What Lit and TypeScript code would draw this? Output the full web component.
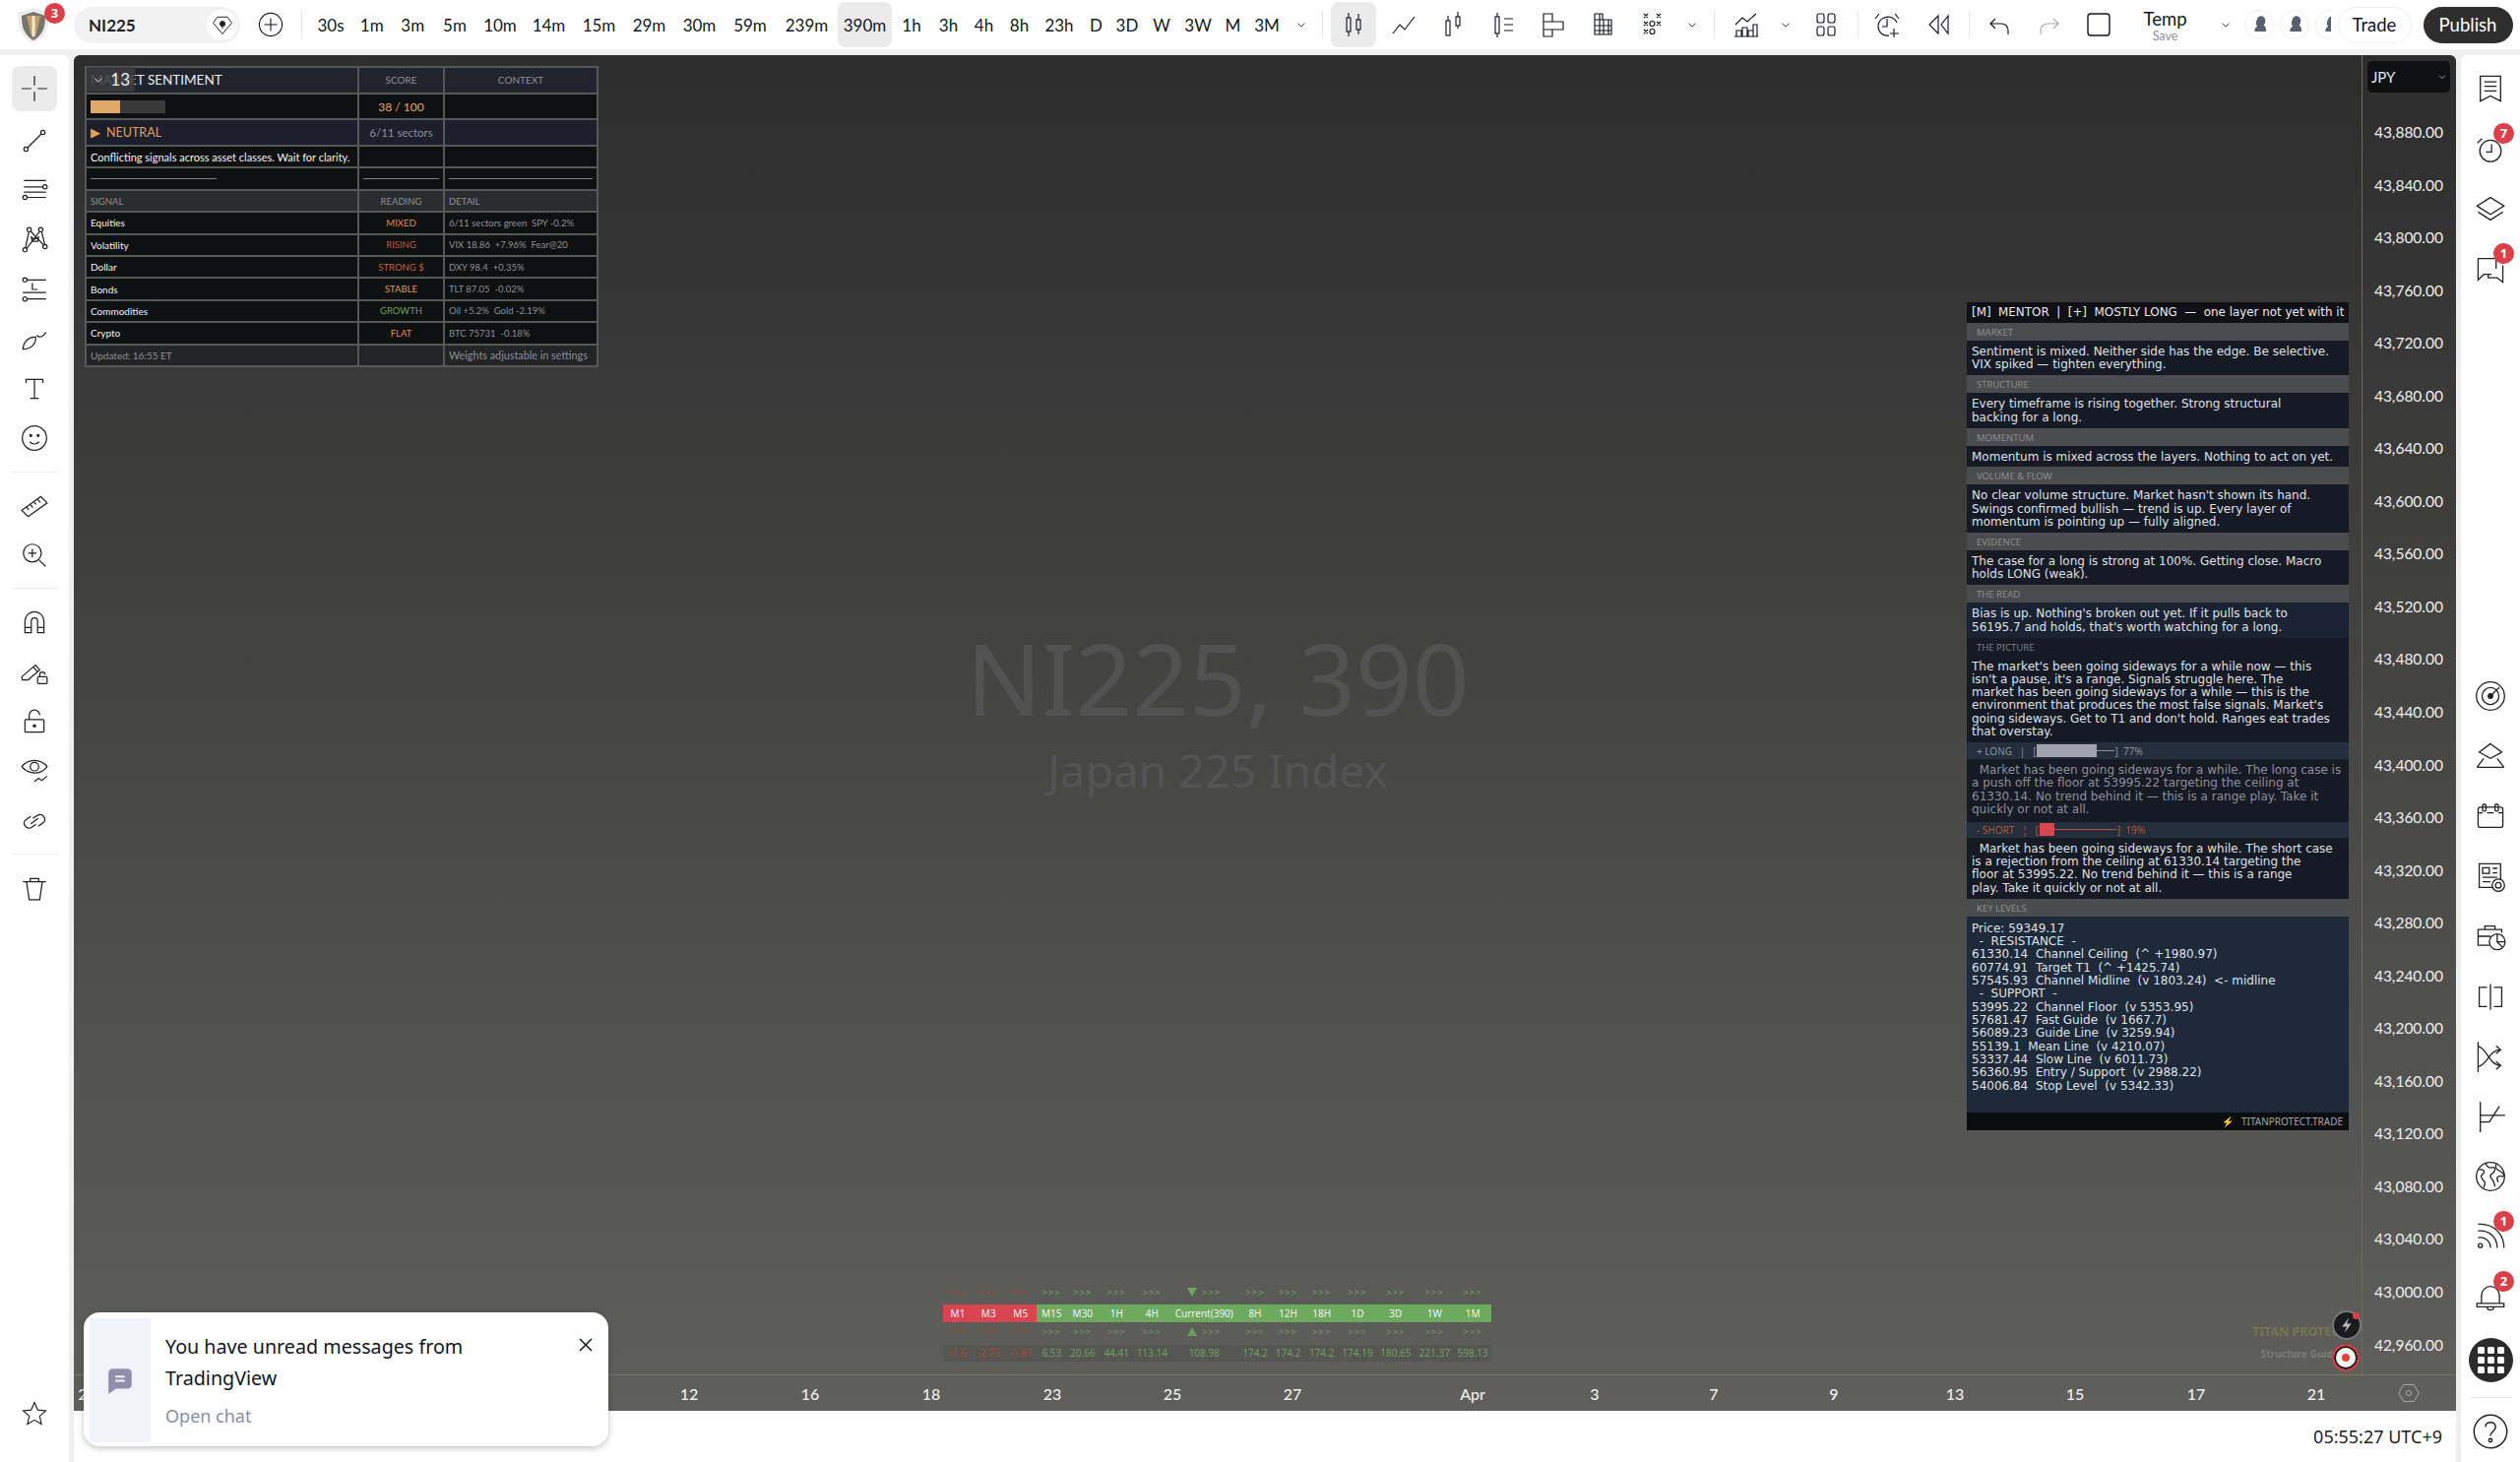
import { LitElement, html, css, svg, nothing } from "lit";
import { customElement } from "lit/decorators.js";

const ic = (body: unknown, size = 28) =>
  html`<svg class="ic" width=${size} height=${size} viewBox="0 0 28 28" fill="none" stroke="currentColor" stroke-width="1.15">${body}</svg>`;

const I = {
  cross: svg`<path d="M14 2v9M14 17v9M2 14h9M17 14h9"/>`,
  trend: svg`<path d="M7.5 20.5 20.5 7.5"/><circle cx="6" cy="22" r="2"/><circle cx="22" cy="6" r="2"/>`,
  fib: svg`<path d="M4 5h21M4 11h18M7 21h18"/><circle cx="24" cy="11" r="2"/><circle cx="5" cy="21" r="2"/><path d="M4 16h21"/>`,
  pattern: svg`<circle cx="5" cy="24" r="2"/><circle cx="9" cy="5" r="2"/><circle cx="20" cy="5" r="2"/><circle cx="24" cy="21" r="2"/><path d="M5.5 22 8.7 7M10.5 6.5 22.7 19.5M19 6.7 6.6 22.7M20.8 6.8 23.8 19M11 12l3 2 4-2-1 4h-5Z"/>`,
  position: svg`<circle cx="5" cy="5" r="2"/><path d="M7 5h18M12 8v6h5" /><path d="M3 17h22M7 23h18"/><circle cx="5" cy="23" r="2"/>`,
  brush: svg`<path d="M3 24c.6-7 5.400-12 12-11.500 1 6.500-4.500 11.500-12 11.500Z"/><path d="M16 11c3 2.500 6 1.500 9-3"/>`,
  text: svg`<path d="M6 8.500V5h16v3.500M14 5v18M10 23h8"/>`,
  smile: svg`<circle cx="14" cy="14" r="11.500"/><path d="M9.500 17.500c2.500 2.800 6.500 2.800 9 0"/><circle cx="10.500" cy="11.500" r=".9" fill="currentColor"/><circle cx="17.500" cy="11.500" r=".9" fill="currentColor"/>`,
  ruler: svg`<path d="M2 19 20 6l6 6-18 13Z"/><path d="M6.500 16l2 2.500M10 13.500l2.500 3M13.500 11l2 2.500M17 8.500l2.500 3"/>`,
  zoom: svg`<circle cx="12" cy="12" r="8.500"/><path d="M12 8v8M8 12h8M18.500 18.500l6 6"/>`,
  magnet: svg`<path d="M5 24V13a9 9 0 0 1 18 0v11h-6V13a3 3 0 0 0-6 0v11ZM5 19h6M17 19h6"/>`,
  pencilLock: svg`<path d="M2 19 15 8l4 4.500L8 22H2.500ZM13 10l4 4.500"/><rect x="17" y="19" width="9" height="6.500" rx="1"/><path d="M19 19v-2a2.500 2.500 0 0 1 5 0M21.500 22v.5"/>`,
  lock: svg`<rect x="5" y="12" width="18" height="12" rx="1"/><path d="M9 12V8a5 5 0 0 1 10 0"/><circle cx="14" cy="18" r="1.100" fill="currentColor"/>`,
  eye: svg`<path d="M2 10c6-8 18-8 24 0-2.500 3.500-6 5.300-9 5.800-3 .5-10.500.2-15-5.800Z"/><circle cx="14" cy="10" r="4"/><path d="M14 24l4-3 3 2 5-4"/>`,
  link: svg`<path d="M12.500 11.500 17 8.500a4.500 4.500 0 0 1 5.500 7l-5 3.500M15.500 17l-4.500 3a4.500 4.500 0 0 1-5.500-7l5-3.500M10.500 16.500l7-5"/>`,
  trash: svg`<path d="M3 8h22M10 8V5h8v3M6.500 8 9 25h10l2.500-17"/>`,
  star: svg`<path d="m14 2.500 3.300 7.600 8.200.8-6.200 5.500 1.800 8.100-7.100-4.200-7.100 4.200 1.800-8.100L2.500 10.900l8.200-.8Z"/>`,
  watch: svg`<path d="M5 3h18v22l-9-4.500L5 25Z"/><path d="M8.500 8h11M8.500 12h11M8.500 16h11"/>`,
  alarm: svg`<circle cx="14" cy="16" r="9.500"/><path d="M15 10v7h-5M2.500 9 6.500 5"/>`,
  layers: svg`<path d="M14 4 26 11.500 14 19 2 11.500ZM3 17l11 7 11-7"/>`,
  chat: svg`<path d="M19 14V5H3v19l5-5h7"/><path d="M25 11v15l-5-4h-8v-3"/>`,
  target: svg`<circle cx="14" cy="14" r="12.500"/><circle cx="14" cy="14" r="7.500"/><circle cx="14" cy="14" r="2" fill="currentColor"/><path d="M14 14 22 6"/>`,
  ideas: svg`<path d="M14 3 24 10.500 14 16 4 10.500ZM2 24 8 16M26 24l-6-8M2 24h24"/>`,
  cal: svg`<rect x="3" y="6" width="22" height="18" rx="2"/><path d="M3 11h4M11 11h6M21 11h4"/><rect x="7" y="3.500" width="3" height="6" rx="1"/><rect x="18" y="3.500" width="3" height="6" rx="1"/>`,
  news: svg`<path d="M16 24H4V3h19v14"/><rect x="7" y="6.500" width="6" height="5"/><path d="M16 7h4M16 11h4M7 15h13M7 19h7"/><circle cx="21" cy="22" r="5.500"/><circle cx="21" cy="22" r="2.500"/>`,
  brief: svg`<path d="M13 22H3V8h21v3M3 14h11M9 8V5h9v3"/><circle cx="20" cy="19" r="7"/><path d="M20 12v7l5 5M20 19h7"/>`,
  book: svg`<path d="M11 6H4v17h7M17 6h7v17h-7M14 3v23"/>`,
  flow: svg`<path d="M3 1v27M3 5c8 2 10 17 20 17m-4-3.500 4 3.500-4 3.500M3 23c8-1 10-15 20-15m-4-3.500L23 8l-4 3.500"/>`,
  option: svg`<path d="M5 1v27M5 13h22M5 19h8l9-14"/>`,
  globe: svg`<circle cx="14" cy="14" r="12.500"/><path d="M4 8c3-1 5 1 4 3s-3 1-2 4 4 3 3 6-1 2-1 3M10 2c0 3 3 5 6 4s2 4 0 5-3 3-1 5 3 7 3 7M19 3c-1 4 1 5 3 6s4 2 4 4-3 0-5 1-1 3 0 5"/>`,
  stream: svg`<circle cx="5" cy="22" r="1.800"/><path d="M3 15c6-1 11 3 11 9M3 9c10-1 17 6 17 15M3 3c14-1 23 9 23 21"/>`,
  bell: svg`<path d="M6 20v-7a8 8 0 0 1 16 0v7M2 20h24v3H2ZM11 23a3 3 0 0 0 6 0"/>`,
  help: svg`<circle cx="14" cy="14" r="13"/><path d="M10 10.500c0-5 8-5 8 0 0 3.500-4 3.500-4 7"/><circle cx="14" cy="21" r="1.300"/>`,
  candle: svg`<path d="M9 2v5M9 21v5M19 3v6M19 19v5"/><rect x="7" y="7" width="4" height="14"/><rect x="17" y="9" width="4" height="10"/>`,
  line: svg`<path d="M3 23l7-9 5 5L25 6"/>`,
  hollow: svg`<path d="M9 5v5M19 1v5M19 15v3"/><rect x="7" y="10" width="4" height="15"/><rect x="17" y="6" width="4" height="9"/>`,
  lines: svg`<path d="M8 2v4M8 23v4M15 8h9M15 14h9M15 20h9"/><rect x="6" y="6" width="4" height="17"/>`,
  range: svg`<path d="M5 3h9v8h11v8H14v7H5ZM5 11h9M5 19h9"/>`,
  table: svg`<path d="M6 3h8v6h9v15H6ZM6 9h8M6 15h17M6 20h17M11 3v21M15 9v15M20 9v15"/>`,
  pf: svg`<path d="M6 3l4 4M10 3 6 7M19 3l4 4M23 3l-4 4M6 11l4 4M10 11l-4 4M19 11l4 4M23 11l-4 4M6 19l4 4M10 19l-4 4"/><circle cx="14.500" cy="13" r="2.500"/><circle cx="14.500" cy="21" r="2.500"/>`,
  ind: svg`<path d="M3 14l7-7 5 4 9-8M4 26v-6h5v6M10 26v-9h5v9M16 26v-6h5v6M21 26V14h4v12M2 26h24"/>`,
  grid: svg`<rect x="6" y="3" width="7" height="9" rx="2"/><rect x="17" y="3" width="7" height="9" rx="2"/><rect x="6" y="16" width="7" height="9" rx="2"/><rect x="17" y="16" width="7" height="9" rx="2"/>`,
  alarmAdd: svg`<path d="M16 25c-6 1-11-3-11-10a10 10 0 0 1 19-3"/><path d="M14 8v8h-5M2 8l4-5M26 8l-4-5M21 18v9M17 23h9"/>`,
  rewind: svg`<path d="m13 5-9 9 9 9ZM23 5l-7 9 7 9Z"/>`,
  undo: svg`<path d="M10 8 5 13l5 5M5 13h11c4 0 7 3 7 7v4"/>`,
  redo: svg`<path d="m18 8 5 5-5 5M23 13H12c-4 0-7 3-7 7v4"/>`,
  square: svg`<rect x="3" y="3" width="22" height="22" rx="3" stroke-width="1.400"/>`,
  plusc: svg`<circle cx="14" cy="14" r="12.500"/><path d="M14 7v14M7 14h14"/>`,
  gem: svg`<path d="M8 5h12l5 7-11 13L3 12Z"/><circle cx="14" cy="13" r="3" fill="currentColor"/><path d="M14 13v6"/>`,
  chev: svg`<path d="m9 12 5 5 5-5"/>`,
  msg: svg`<path d="M7 3h14a4 4 0 0 1 4 4v11a4 4 0 0 1-4 4H10l-7 5V7a4 4 0 0 1 4-4Z" fill="#8d90aa" stroke="none"/><path d="M9.500 10.500h9M9.500 14.500h9" stroke="#f0f3fa" stroke-width="2"/>`,
  hex: svg`<path d="M8 4h12l6 10-6 10H8L2 14Z"/><circle cx="14" cy="14" r="3"/>`,
  person: svg`<path d="M16 3c4 0 6 3 6 6s-1 4-2 6l2 2c1 2 1 4 1 6H8c0-3 1-5 3-6 1-1 0-2-1-3 0-2 0-4 1-6 1-3 3-5 5-5Z" fill="currentColor" stroke="none"/>`,
  bolt: svg`<path d="M17 4 8 16h6l-3 8 9-12h-6Z" fill="#bbb" stroke="none"/>`,
};

const intervals: [string, number][] = [
  ["30s", 42], ["1m", 41.5], ["3m", 41.5], ["5m", 44], ["10m", 48], ["14m", 51], ["15m", 51], ["29m", 51], ["30m", 51],
  ["59m", 52], ["239m", 63], ["390m", 55], ["1h", 40], ["3h", 35], ["4h", 37], ["8h", 35], ["23h", 46], ["D", 29], ["3D", 34],
  ["W", 36], ["3W", 38], ["M", 33], ["3M", 36],
];

const signals = [
  ["Equities", "MIXED", "#e08a4f", "6/11 sectors green  SPY -0.2%"],
  ["Volatility", "RISING", "#c4583e", "VIX 18.86  +7.96%  Fear@20"],
  ["Dollar", "STRONG $", "#c4603c", "DXY 98.4  +0.35%"],
  ["Bonds", "STABLE", "#e29a4c", "TLT 87.05  -0.02%"],
  ["Commodities", "GROWTH", "#69a65a", "Oil +5.2%  Gold -2.19%"],
  ["Crypto", "FLAT", "#e88f3c", "BTC 75731  -0.18%"],
];

const prices = Array.from({ length: 24 }, (_, i) => (43880 - i * 40).toLocaleString("en-US", { minimumFractionDigits: 2 }));

const ticks: [string, number][] = [
  ["2", 84], ["12", 700], ["16", 823], ["18", 946], ["23", 1069], ["25", 1191], ["27", 1313], ["Apr", 1496], ["3", 1620],
  ["7", 1741], ["9", 1863], ["13", 1986], ["15", 2108], ["17", 2231], ["21", 2353],
];

const tfCols: [string, string, string, string][] = [
  ["M1", "-1.6", "r", ""], ["M3", "-2.73", "r", ""], ["M5", "-1.87", "r", ""], ["M15", "6.53", "g", ""], ["M30", "20.66", "g", ""],
  ["1H", "44.41", "g", ""], ["4H", "113.14", "g", ""], ["Current(390)", "108.98", "g", "cur"], ["8H", "174.2", "g", ""],
  ["12H", "174.2", "g", ""], ["18H", "174.2", "g", ""], ["1D", "174.19", "g", ""], ["3D", "180.65", "g", ""], ["1W", "221.37", "g", ""],
  ["1M", "598.13", "g", ""],
];

const mentor: { l?: string; b: string; k?: string }[] = [
  { l: "MARKET", b: "Sentiment is mixed. Neither side has the edge. Be selective.\nVIX spiked — tighten everything." },
  { l: "STRUCTURE", b: "Every timeframe is rising together. Strong structural\nbacking for a long." },
  { l: "MOMENTUM", b: "Momentum is mixed across the layers. Nothing to act on yet." },
  { l: "VOLUME & FLOW", b: "No clear volume structure. Market hasn't shown its hand.\nSwings confirmed bullish — trend is up. Every layer of\nmomentum is pointing up — fully aligned." },
  { l: "EVIDENCE", b: "The case for a long is strong at 100%. Getting close. Macro\nholds LONG (weak)." },
  { l: "THE READ", k: "blue", b: "Bias is up. Nothing's broken out yet. If it pulls back to\n56195.7 and holds, that's worth watching for a long." },
  { l: "THE PICTURE", k: "dark", b: "The market's been going sideways for a while now — this\nisn't a pause, it's a range. Signals struggle here. The\nmarket has been going sideways for a while — this is the\nenvironment that produces the most false signals. Market's\ngoing sideways. Get to T1 and don't hold. Ranges eat trades\nthat overstay." },
];

const tri = (up: boolean) =>
  html`<svg class="tri" width="10" height="9" viewBox="0 0 10 9"><path d=${up ? "M5 0 10 9H0Z" : "M0 0h10L5 9Z"} fill="#6eaa5e"></path></svg>`;

@customElement("tf-strip")
class TfStrip extends LitElement {
  static styles = css`
    :host { display: grid; grid-template-columns: 30px 32.5px 32.5px 30.600px 32.5px 36.4px 35.6px 70.4px 33px 34px 34.4px 38.3px 39.4px 39.4px 38.3px; grid-template-rows: 21px 18px 20px 20px; font: 10px "Noto Sans", sans-serif; text-align: center; }
    .chev { font-size: 9px; letter-spacing: 1.2px; line-height: 18px; white-space: nowrap; }
    .lo { line-height: 20px; opacity: .85; }
    .r { color: #b5452f; } .g { color: #6fa95f; }
    .name { color: #f1f1f1; line-height: 18px; white-space: nowrap; }
    .bgr { background: #d9454f; } .bgg { background: #6eaa5e; }
    .val { background: #00000012; line-height: 17px; font-size: 10px; margin-top: 3px; white-space: nowrap; }
    .val.r { color: #b0482f; } .val.g { color: #6f9f60; }
    .tri { margin-right: 5px; vertical-align: -1px; }
  `;
  render() {
    return html`
      ${tfCols.map((c) => html`<div class="chev ${c[2]}">${c[3] ? tri(false) : nothing}${c[2] === "r" ? "<<<" : ">>>"}</div>`)}
      ${tfCols.map((c) => html`<div class="name ${c[2] === "r" ? "bgr" : "bgg"}">${c[0]}</div>`)}
      ${tfCols.map((c) => html`<div class="chev lo ${c[2]}">${c[3] ? tri(true) : nothing}${c[2] === "r" ? "<<<" : ">>>"}</div>`)}
      ${tfCols.map((c) => html`<div class="val ${c[2]}">${c[1]}</div>`)}
    `;
  }
}

@customElement("mentor-panel")
class MentorPanel extends LitElement {
  static styles = css`
    :host { display: block; width: 388px; font: 12px/13.33px "DejaVu Sans", sans-serif; color: #dfe1e6; background: #161a25; }
    .head { height: 21px; background: #0f1116; line-height: 21px; padding-left: 5px; font-size: 11.900px; white-space: pre; color: #e8e9ec; overflow: hidden; }
    .lab { height: 18px; background: #4b4c4e; color: #8b8d90; font: 9.5px/19px "Noto Sans", sans-serif; padding-left: 10px; }
    .lab.dark { background: #161a25; color: #7c7f86; }
    .body { background: #161a25; padding: 5px 5px 3.600px; white-space: pre; overflow: hidden; }
    .body.blue { background: #1b2333; }
    .body.dim { color: #8d9098; padding-bottom: 5.400px; }
    .bar { height: 17px; background: #252e3d; display: flex; align-items: center; padding-left: 10px; font: 10px "Noto Sans", sans-serif; white-space: pre; }
    .long { color: #8d9098; } .short { color: #b4552f; height: 16px; }
    .track { position: relative; display: inline-block; width: 79px; height: 1px; margin-left: 1px; background: currentColor; }
    .fill { position: absolute; left: 0; top: -6px; height: 13px; }
    .levels { background: #1e2a3a; padding: 6px 5px 19.900px; white-space: pre; }
    .foot { height: 18px; background: #0c0d0f; display: flex; justify-content: flex-end; align-items: center; gap: 8px; padding-right: 6px; color: #a2a5ab; font: 10px "Noto Sans", sans-serif; }
    .flash { color: #e88f3c; font-size: 10px; }
  `;
  render() {
    return html`
      <div class="head">[M]  MENTOR  |  [+]  MOSTLY LONG  —  one layer not yet with it</div>
      ${mentor.map((m) => html`<div class="lab ${m.k === "dark" ? "dark" : ""}">${m.l}</div><div class="body ${m.k === "blue" ? "blue" : ""}">${m.b}</div>`)}
      <div class="bar long">+ LONG   |   [<span class="track"><span class="fill" style="width:${0.77 * 79}px;background:#a0a3ad"></span></span>]  77%</div>
      <div class="body dim">  Market has been going sideways for a while. The long case is
a push off the floor at 53995.22 targeting the ceiling at
61330.14. No trend behind it — this is a range play. Take it
quickly or not at all.</div>
      <div class="bar short">- SHORT   ¦   [<span class="track"><span class="fill" style="width:${0.19 * 79}px;background:#d9454f"></span></span>]  19%</div>
      <div class="body">  Market has been going sideways for a while. The short case
is a rejection from the ceiling at 61330.14 targeting the
floor at 53995.22. No trend behind it — this is a range
play. Take it quickly or not at all.</div>
      <div class="lab">KEY LEVELS</div>
      <div class="levels">Price: 59349.17
  -  RESISTANCE  -
61330.14  Channel Ceiling  (^ +1980.97)
60774.91  Target T1  (^ +1425.74)
57545.93  Channel Midline  (v 1803.24)  <- midline
  -  SUPPORT  -
53995.22  Channel Floor  (v 5353.95)
57681.47  Fast Guide  (v 1667.7)
56089.23  Guide Line  (v 3259.94)
55139.1  Mean Line  (v 4210.07)
53337.44  Slow Line  (v 6011.73)
56360.95  Entry / Support  (v 2988.22)
54006.84  Stop Level  (v 5342.33)</div>
      <div class="foot"><span class="flash">⚡</span><span>TITANPROTECT.TRADE</span></div>
    `;
  }
}

@customElement("sentiment-table")
class SentimentTable extends LitElement {
  static styles = css`
    :host { display: grid; position: relative; grid-template-columns: 275px 85px 154px; grid-template-rows: repeat(3, 24.7px) repeat(10, 20.4px); gap: 2px; padding: 2px; width: 518px; background: #565757; font: 9.5px "Lato", sans-serif; color: #eee; }
    .c { background: #0f1011; display: flex; align-items: center; padding: 0 4px; white-space: pre; min-width: 0; }
    .ctr { justify-content: center; }
    .hd { background: #21232d; }
    .hd2 { background: #2b2c30; }
    .nav { background: #1c1e2c; }
    .ft { background: #232426; color: #8d8e90; font-size: 10px; }
    .ftw { font-size: 10.800px; justify-content: flex-start; }
    .dim { color: #8e9096; }
    .big { font-size: 11px; color: #f3f3f3; }
    .nm { font-size: 10px; color: #f3f3f3; }
    .title { font-size: 13.500px; color: #ececec; }
    .h { font-size: 10px; color: #8f9195; }
    .score { color: #e2a56a; font-size: 12px; }
    .sect { font-size: 11.500px; }
    .neutral { color: #e0a056; font-size: 12.5px; gap: 6px; }
    .barbox { display: flex; width: 76px; height: 13px; background: #3a3a3a; }
    .barfill { background: #e1a86c; height: 13px; }
    .rule { display: block; height: 1px; width: 100%; background: #7f8082; }
    .rule.short { width: 128px; }
    .fold { position: absolute; left: 2px; top: 1px; width: 49px; height: 25px; background: #3a3b3fe0; border-radius: 2px; display: flex; align-items: center; justify-content: flex-end; padding-right: 5px; box-sizing: border-box; color: #eee; font-size: 17px; }
    .fold .ic { position: absolute; left: 2px; top: 3px; }
    .ic { display: block; }
  `;
  render() {
    return html`
      <div class="c hd title">MARKET SENTIMENT</div><div class="c hd ctr h">SCORE</div><div class="c hd ctr h">CONTEXT</div>
      <div class="c"><span class="barbox"><span class="barfill" style="width:${0.38 * 80}px"></span></span></div><div class="c ctr score">38 / 100</div><div class="c"></div>
      <div class="c nav neutral">▶<span>NEUTRAL</span></div><div class="c nav ctr dim sect">6/11 sectors</div><div class="c nav"></div>
      <div class="c big">Conflicting signals across asset classes. Wait for clarity.</div><div class="c"></div><div class="c"></div>
      <div class="c"><span class="rule short"></span></div><div class="c"><span class="rule"></span></div><div class="c"><span class="rule"></span></div>
      <div class="c hd2 dim">SIGNAL</div><div class="c hd2 ctr dim">READING</div><div class="c hd2 dim">DETAIL</div>
      ${signals.map((s) => html`<div class="c nm">${s[0]}</div><div class="c ctr" style="color:${s[2]}">${s[1]}</div><div class="c dim">${s[3]}</div>`)}
      <div class="c ft">Updated: 16:55 ET</div><div class="c ft"></div><div class="c ft ftw">Weights adjustable in settings</div>
      <div class="fold">${ic(I.chev, 20)}<span>13</span></div>
    `;
  }
}

@customElement("app-root")
class AppRoot extends LitElement {
  static styles = css`
    :host { display: block; width: 2560px; height: 1485px; position: relative; overflow: hidden; background: #efefef; font-family: "Lato", "Liberation Sans", sans-serif; color: #131722; }
    .ic { display: block; flex: none; }
    .top { height: 50px; background: #fff; display: flex; align-items: center; margin-bottom: 6px; font-size: 17px; }
    .logo { width: 75px; height: 50px; position: relative; flex: none; }
    .logo svg { position: absolute; left: 16px; top: 7px; }
    .badge { position: absolute; background: #dc3f48; color: #fff; border-radius: 50%; width: 21px; height: 21px; font-size: 13px; line-height: 21px; text-align: center; font-weight: 700; font-family: "Noto Sans", sans-serif; }
    .logo .badge { left: 45px; top: 3px; }
    .sym { width: 169px; height: 37px; border-radius: 19px; background: #f2f2f2; display: flex; align-items: center; box-sizing: border-box; padding: 0 3px 0 15px; font-size: 17px; color: #222; flex: none; }
    .sym span { flex: 1; font-weight: 700; }
    .gem { width: 31px; height: 31px; border-radius: 50%; background: #fff; display: flex; align-items: center; justify-content: center; }
    .plus { width: 62px; display: flex; justify-content: center; flex: none; }
    .sep { width: 1px; height: 28px; background: #e6e6e6; flex: none; }
    .ints { display: flex; margin-left: 8px; height: 46px; flex: none; }
    .int { display: flex; align-items: center; justify-content: center; flex: none; }
    .int.on { background: #ebebeb; border-radius: 8px; }
    .slot { width: 50.500px; height: 46px; display: flex; align-items: center; justify-content: center; flex: none; color: #131722; }
    .slot.on { background: #ebebeb; border-radius: 8px; width: 46px; margin: 0 2.250px; }
    .ch { width: 30px; }
    .wch { width: 34px; }
    .s1 { margin: 0 6px 0 4px; }
    .s2 { margin: 0 7px; }
    .s3 { margin: 0 4.500px 0 7px; }
    .s4 { margin: 0 5px; }
    .ml2 { margin-left: 2px; }
    .redo { color: #a9acb8; }
    .temp { width: 84px; text-align: center; line-height: 1; flex: none; font-size: 18.500px; padding-top: 3px; }
    .temp small { display: block; font-size: 12.500px; color: #8d90a0; margin-top: 2px; }
    .cht { margin-left: 4px; }
    .avs { display: flex; width: 91px; margin-left: 1px; overflow: hidden; flex: none; }
    .av { width: 30px; height: 30px; margin: 0 3px; flex: none; border-radius: 50%; border: 1px solid #eee; display: flex; align-items: center; justify-content: center; color: #5a5f70; box-sizing: border-box; }
    .trade { width: 75px; height: 37px; box-sizing: border-box; border: 1px solid #eee; border-radius: 19px; display: flex; align-items: center; justify-content: center; margin-left: 7px; flex: none; font-size: 18.500px; }
    .pub { width: 91px; height: 37px; border-radius: 19px; background: #2e2e2e; color: #fff; display: flex; align-items: center; justify-content: center; margin-left: 12px; flex: none; font-size: 18.500px; }

    .main { display: flex; height: 1429px; gap: 5px; }
    .left { width: 70px; background: #fff; display: flex; flex-direction: column; align-items: center; padding-top: 11px; box-sizing: border-box; border-radius: 0 6px 0 0; color: #222; position: relative; flex: none; }
    .tool { height: 50.400px; width: 46px; display: flex; align-items: center; justify-content: center; flex: none; }
    .tool.on { background: #ebebeb; border-radius: 8px; height: 46px; margin-bottom: 4.400px; }
    .lsep { width: 48px; height: 1px; background: #ececec; margin: 8.500px 0; flex: none; }
    .fav { position: absolute; left: 21px; top: 1366px; }
    .mid { flex: 1; display: flex; flex-direction: column; min-width: 0; }
    .chart { height: 1377px; border-radius: 6px 6px 0 0; background: linear-gradient(#2d2d2d, #5f5f5c); display: flex; flex-direction: column; overflow: hidden; flex: none; }
    .up { height: 1341px; display: flex; flex: none; border-bottom: 1px solid #787a60; box-sizing: border-box; }
    .pane { width: 2324px; position: relative; flex: none; }
    .price { width: 96px; border-left: 1px solid #6b6b5c; box-sizing: border-box; color: #efefef; font-size: 15.500px; flex: none; }
    .jpy { height: 32px; margin: 6px 6px 13.200px 5px; background: #0f1012; border-radius: 5px; display: flex; align-items: center; justify-content: space-between; padding-left: 4px; color: #e6e6e6; font-size: 15px; }
    .pl { height: 53.560px; display: flex; align-items: center; justify-content: flex-end; padding-right: 13px; }
    .taxis { height: 36px; position: relative; color: #efefef; font-size: 16px; font-weight: 500; flex: none; }
    .tick { position: absolute; top: 9px; transform: translateX(-50%); }
    .hexi { position: absolute; left: 2360px; top: 6px; color: #aaa; }
    .wm { position: absolute; left: 0; right: 0; text-align: center; white-space: nowrap; font-family: "Noto Sans", sans-serif; }
    .wm1 { top: 564px; font-size: 101px; line-height: 136px; color: #525252; }
    .wm2 { top: 698px; font-size: 46px; line-height: 56px; color: #545454; }
    sentiment-table { position: absolute; left: 11px; top: 11px; }
    mentor-panel { position: absolute; left: 1923px; top: 251px; }
    tf-strip { position: absolute; left: 883px; top: 1248px; }
    .wt1 { position: absolute; left: 2213px; top: 1288px; color: #77774f; font: 700 12.500px "Noto Sans", sans-serif; white-space: nowrap; }
    .wt2 { position: absolute; left: 2222px; top: 1312px; color: #7c7c7c; font: 700 10px "Noto Sans", sans-serif; white-space: nowrap; }
    .btn1 { position: absolute; left: 2294px; top: 1275px; width: 30px; height: 30px; box-sizing: border-box; border: 2px solid #77777c; border-radius: 50%; background: #1a1b1f; display: flex; align-items: center; justify-content: center; }
    .btn1 i { position: absolute; right: 0; top: 0; width: 7px; height: 7px; border-radius: 50%; background: #e23d45; }
    .btn2 { position: absolute; left: 2294px; top: 1309px; width: 28px; height: 28px; box-sizing: border-box; border: 2px solid #d9353e; box-shadow: inset 0 0 0 2px #1b1b1b; border-radius: 50%; background: #f4f4f4; display: flex; align-items: center; justify-content: center; }
    .btn2 i { width: 8px; height: 8px; border-radius: 50%; background: #e2453f; }

    .bot { flex: 1; background: #fff; display: flex; align-items: center; justify-content: flex-end; padding-right: 14px; font-size: 18px; color: #222; font-family: "Noto Sans", sans-serif; position: relative; }
    .botsep { position: absolute; left: 367px; top: 0; bottom: 16px; width: 1px; background: #e5e5e5; }
    .boticon { position: absolute; left: 391px; top: 28px; width: 14px; height: 3px; border-bottom: 2px solid #333; }

    .right { width: 60px; background: #fff; border-radius: 6px 0 0 0; display: flex; flex-direction: column; align-items: center; padding-top: 3px; box-sizing: border-box; color: #222; flex: none; }
    .rt { height: 61px; width: 48px; display: flex; align-items: center; justify-content: center; position: relative; flex: none; }
    .rt .badge { left: 27px; top: 5px; }
    .rsp { flex: 1; }
    .apps { width: 45px; height: 45px; border-radius: 50%; background: #2b2b2b; display: grid; grid-template-columns: repeat(3, 7px); gap: 3px; align-content: center; justify-content: center; margin-top: 12px; flex: none; }
    .apps i { width: 7px; height: 7px; background: #fff; border-radius: 1.500px; }
    .rsep { width: 44px; height: 1px; background: #eaeaea; margin: 15px 0 16px; flex: none; }
    .helpb { margin-bottom: 13px; flex: none; }

    .toast { position: absolute; left: 85px; top: 1333px; width: 533px; height: 136px; background: #fff; border-radius: 16px; box-shadow: 0 2px 6px #0000003d; display: flex; padding: 6px; box-sizing: border-box; }
    .tico { width: 62px; height: 126px; background: #f0f3fa; display: flex; align-items: center; justify-content: center; flex: none; }
    .tb { flex: 1; padding: 13px 0 0 15px; font-size: 19.700px; line-height: 32px; color: #131722; font-family: "Noto Sans", sans-serif; }
    .tb a { display: block; margin-top: 8px; font-size: 18px; line-height: 28px; color: #8a8fa8; }
    .tx { width: 40px; display: flex; justify-content: center; padding-top: 19px; margin-left: 3px; margin-right: -3px; align-items: flex-start; box-sizing: border-box; flex: none; }
  `;

  tool(k: keyof typeof I, on = false) {
    return html`<div class="tool ${on ? "on" : ""}">${ic(I[k], 30)}</div>`;
  }
  slot(k: keyof typeof I, on = false, cls = "") {
    return html`<div class="slot ${on ? "on" : ""} ${cls}">${ic(I[k], 28)}</div>`;
  }
  chev(cls = "") {
    return html`<div class="slot ch ${cls}">${ic(I.chev, 20)}</div>`;
  }
  rt(k: keyof typeof I, badge = "") {
    return html`<div class="rt">${ic(I[k], 32)}${badge ? html`<span class="badge">${badge}</span>` : nothing}</div>`;
  }

  render() {
    return html`
      <div class="top">
        <div class="logo">
          <svg width="36" height="38" viewBox="0 0 36 38">
            <path d="M18 1 34 6c0 14-3 24-16 31C5 30 2 20 2 6Z" fill="#ececec"/>
            <path d="M18 5 30 9c0 11-2 19-12 25C8 28 6 20 6 9Z" fill="#76746f"/>
            <path d="M11 9h14l-4 18-3 5-3-5Z" fill="#c79c63"/>
            <path d="M16.500 9h3v21h-3Z" fill="#efe6d6"/>
          </svg>
          <span class="badge">3</span>
        </div>
        <div class="sym"><span>NI225</span><div class="gem">${ic(I.gem, 24)}</div></div>
        <div class="plus">${ic(I.plusc, 26)}</div>
        <div class="sep"></div>
        <div class="ints">
          ${intervals.map((i) => html`<div class="int ${i[0] === "390m" ? "on" : ""}" style="width:${i[1]}px">${i[0]}</div>`)}
          <div class="slot wch">${ic(I.chev, 20)}</div>
        </div>
        <div class="sep s1"></div>
        ${this.slot("candle", true)}${this.slot("line")}${this.slot("hollow")}${this.slot("lines")}${this.slot("range")}${this.slot("table")}${this.slot("pf")}
        ${this.chev()}
        <div class="sep s2"></div>
        ${this.slot("ind")}${this.chev()}${this.slot("grid")}
        <div class="sep s3"></div>
        ${this.slot("alarmAdd")}${this.slot("rewind", false, "ml2")}
        <div class="sep s4"></div>
        ${this.slot("undo")}${this.slot("redo", false, "redo")}${this.slot("square")}
        <div class="temp">Temp<small>Save</small></div>
        ${this.chev("cht")}
        <div class="avs">
          <div class="av">${ic(I.person, 22)}</div><div class="av">${ic(I.person, 22)}</div><div class="av">${ic(I.person, 22)}</div>
        </div>
        <div class="trade">Trade</div>
        <div class="pub">Publish</div>
      </div>
      <div class="main">
        <div class="left">
          ${this.tool("cross", true)}${this.tool("trend")}${this.tool("fib")}${this.tool("pattern")}${this.tool("position")}${this.tool("brush")}${this.tool("text")}${this.tool("smile")}
          <div class="lsep"></div>
          ${this.tool("ruler")}${this.tool("zoom")}
          <div class="lsep"></div>
          ${this.tool("magnet")}${this.tool("pencilLock")}${this.tool("lock")}${this.tool("eye")}${this.tool("link")}
          <div class="lsep"></div>
          ${this.tool("trash")}
          <div class="fav">${ic(I.star, 28)}</div>
        </div>
        <div class="mid">
          <div class="chart">
            <div class="up">
              <div class="pane">
                <div class="wm wm1">NI225, 390</div>
                <div class="wm wm2">Japan 225 Index</div>
                <sentiment-table></sentiment-table>
                <mentor-panel></mentor-panel>
                <tf-strip></tf-strip>
                <div class="wt1">TITAN PROTECT</div>
                <div class="wt2">Structure Guide</div>
                <div class="btn1">${ic(I.bolt, 22)}<i></i></div>
                <div class="btn2"><i></i></div>
              </div>
              <div class="price">
                <div class="jpy">JPY${ic(I.chev, 16)}</div>
                ${prices.map((p) => html`<div class="pl">${p}</div>`)}
              </div>
            </div>
            <div class="taxis">
              ${ticks.map((t) => html`<span class="tick" style="left:${t[1] - 75}px">${t[0]}</span>`)}
              <div class="hexi">${ic(I.hex, 24)}</div>
            </div>
          </div>
          <div class="bot">
            <span class="botsep"></span><span class="boticon"></span>
            05:55:27 UTC+9
          </div>
        </div>
        <div class="right">
          ${this.rt("watch")}${this.rt("alarm", "7")}${this.rt("layers")}${this.rt("chat", "1")}
          <div class="rsp"></div>
          ${this.rt("target")}${this.rt("ideas")}${this.rt("cal")}${this.rt("news")}${this.rt("brief")}${this.rt("book")}${this.rt("flow")}${this.rt("option")}${this.rt("globe")}${this.rt("stream", "1")}${this.rt("bell", "2")}
          <div class="apps">${Array.from({ length: 9 }, () => html`<i></i>`)}</div>
          <div class="rsep"></div>
          <div class="helpb">${ic(I.help, 36)}</div>
        </div>
      </div>
      <div class="toast">
        <div class="tico">${ic(I.msg, 30)}</div>
        <div class="tb">You have unread messages from<br />TradingView<a>Open chat</a></div>
        <div class="tx"><svg width="16" height="16" viewBox="0 0 16 16" fill="none" stroke="#131722" stroke-width="1.500"><path d="M2 2l12 12M14 2 2 14"/></svg></div>
      </div>
    `;
  }
}
